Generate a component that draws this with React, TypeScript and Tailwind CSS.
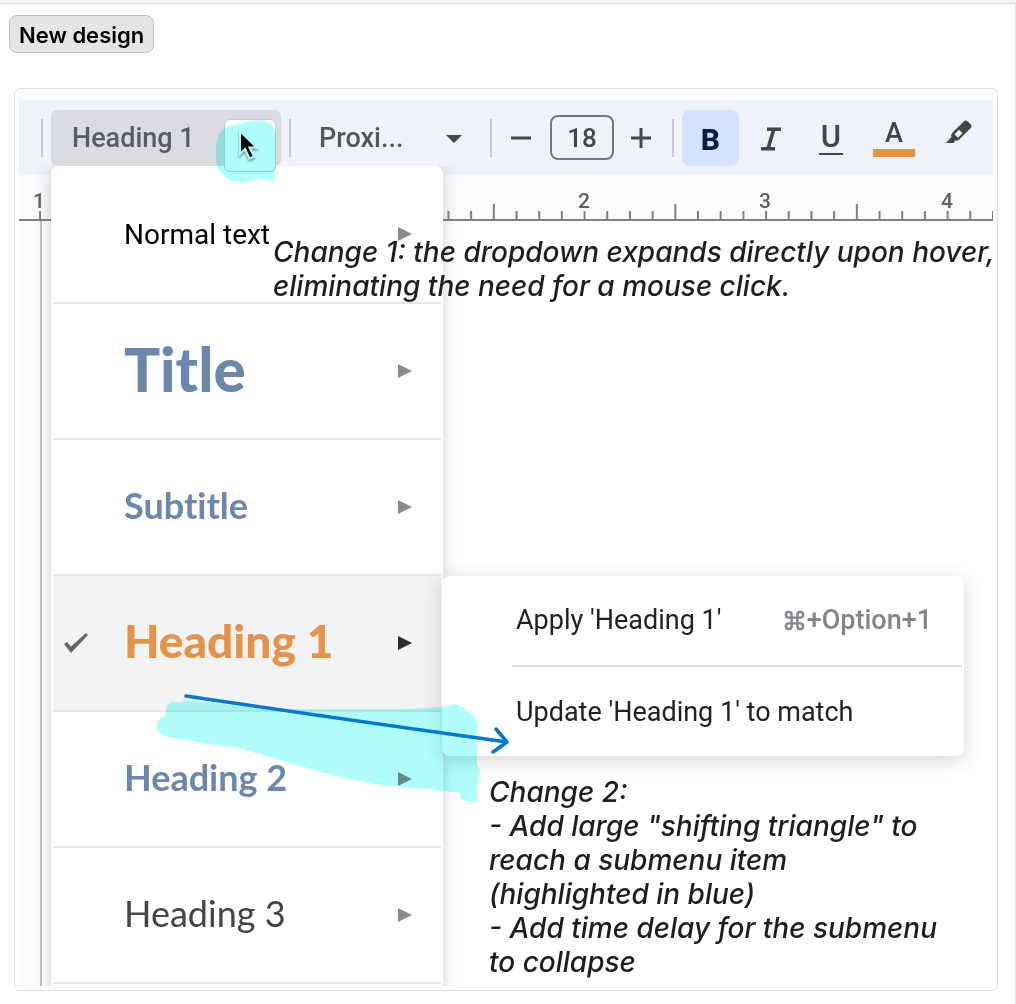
import React from "react";

const ticks = Array.from({ length: 43 }, (_, i) => i);

const styles = [
  { name: "Normal text", text: "text-[28px] text-black font-[Roboto] font-normal pt-[2px]" },
  { name: "Title", text: "text-[60px] text-[#6b87ab] font-[Lato] font-black pb-1" },
  { name: "Subtitle", text: "text-[36px] text-[#6b87ab] font-[Lato] font-bold pb-1" },
  { name: "Heading 1", text: "text-[46px] text-[#e69348] font-[Lato] font-black pb-1", active: true },
  { name: "Heading 2", text: "text-[36px] text-[#6b87ab] font-[Lato] font-bold pb-1" },
  { name: "Heading 3", text: "text-[36px] text-[#444444] font-[Lato] font-normal pb-1" },
];

function Divider({ className = "" }: { className?: string }) {
  return <span className={`h-[38px] w-[2px] shrink-0 bg-[#c7c9cb] ${className}`} />;
}

function Toolbar() {
  return (
    <div className="border-t-8 border-[#f9fbfd] bg-[#eff2f8] font-[Roboto] text-[#444746]">
      <div className="flex h-[75px] items-center overflow-hidden">
        <Divider className="ml-[22px]" />
        <button className="ml-2 h-14 w-[230px] shrink-0 rounded-md bg-[#dadce2] pt-[2px] pl-[21px] text-left text-[27px] font-medium text-[#5a5d5e]">
          Heading 1
        </button>
        <Divider className="ml-2" />
        <button className="ml-7 flex w-[144px] shrink-0 items-center justify-between pt-[2px] text-[27px] font-medium text-[#555857]">
          Proxi...
          <svg width="16" height="8" viewBox="0 0 16 8" className="mr-px">
            <path d="M0 0h16L8 8z" fill="#444746" />
          </svg>
        </button>
        <Divider className="ml-[27px]" />
        <button aria-label="Decrease font size" className="ml-[19px] shrink-0">
          <svg width="20" height="20" viewBox="0 0 20 20" stroke="#444746" strokeWidth="3">
            <path d="M0 10h20" />
          </svg>
        </button>
        <input
          aria-label="Font size"
          defaultValue="18"
          className="ml-[19px] h-[45px] w-16 shrink-0 rounded-lg border-2 border-[#747775] bg-transparent text-center text-[26px] font-medium"
        />
        <button aria-label="Increase font size" className="ml-[17px] shrink-0">
          <svg width="20" height="20" viewBox="0 0 20 20" stroke="#444746" strokeWidth="3">
            <path d="M0 10h20M10 0v20" />
          </svg>
        </button>
        <Divider className="ml-[21px]" />
        <button
          aria-label="Bold"
          className="ml-2 h-14 w-[57px] shrink-0 rounded-lg bg-[#d3e3fd] pt-1 text-[30px] font-extrabold text-[#041e49]"
        >
          B
        </button>
        <button aria-label="Italic" className="ml-[22px] shrink-0 pt-[2px]">
          <svg width="20" height="24" viewBox="0 0 20 24" fill="none" stroke="#444746" strokeWidth="3.6">
            <path d="M6 2.3h14M0 21.7h14M12.8 2.3L7 21.7" />
          </svg>
        </button>
        <button
          aria-label="Underline"
          className="ml-[38px] flex w-6 shrink-0 flex-col items-center pt-1 text-[31px] leading-6 font-medium"
        >
          U
          <span className="mt-1 h-[2px] w-full bg-[#444746]" />
        </button>
        <button
          aria-label="Text color"
          className="ml-[30px] flex w-[42px] shrink-0 flex-col items-center pt-[2px] text-[27px] leading-6 font-medium"
        >
          A
          <span className="mt-1 h-2 w-full bg-[#e69348]" />
        </button>
        <button aria-label="Highlight color" className="mb-3 ml-[30px] shrink-0">
          <svg width="28" height="25" viewBox="0 0 28 25">
            <path
              fillRule="evenodd"
              fill="#444746"
              d="M1 24L6.500 18Q5.500 15.500 7.500 13.500L19 2.200Q20.800 .6 22.600 2.200L25.800 5.400Q27.400 7.200 25.800 9L14.500 20.300Q12.500 22.200 10.300 21.500L8.500 24zM9.500 15.200L13 18.700L17.500 14.200L14 10.700z"
            />
          </svg>
        </button>
      </div>
    </div>
  );
}

function Ruler() {
  return (
    <div className="h-[46px] overflow-hidden border-b-2 border-[#808080] bg-[#f9fbfd]">
      <svg
        width="976"
        height="44"
        viewBox="0 0 976 44"
        fill="#5f6162"
        className="max-w-none font-[Roboto] text-[21px] font-medium"
      >
        {ticks.map((i) => (
          <rect key={i} x={20 + i * 22.69} y={i % 8 === 4 ? 29 : 36} width="2" height="15" fill="#808080" />
        ))}
        <text x="20" y="33" textAnchor="middle">1</text>
        <text x="565" y="33" textAnchor="middle">2</text>
        <text x="746" y="33" textAnchor="middle">3</text>
        <text x="928" y="33" textAnchor="middle">4</text>
      </svg>
    </div>
  );
}

function StyleMenu() {
  return (
    <ul className="absolute top-[74px] bottom-0 left-8 w-[392px] overflow-hidden rounded-t-lg bg-white px-[2px]">
      {styles.map((s) => (
        <li key={s.name} className="h-[136px] border-b-2 border-[#e6e6e6] first:h-[138px]">
          <button
            className={`flex h-full w-full items-center pr-[29px] text-left whitespace-nowrap ${s.active ? "bg-[#f1f3f4]" : ""}`}
          >
            <span className="flex w-[71px] shrink-0 justify-start pl-[10px]">
              {s.active && (
                <svg width="26" height="22" viewBox="0 0 26 22">
                  <path d="M1 12L4 10L8 14.500L23 1L25 3L8 21z" fill="#666" />
                </svg>
              )}
            </span>
            <span className={`grow leading-none [font-variant-ligatures:none] ${s.text}`}>{s.name}</span>
            <svg width="14" height="14" viewBox="0 0 14 14" className="shrink-0">
              <path d="M0 0L14 7L0 14z" fill={s.active ? "#2b2b2b" : "#8c8c8e"} />
            </svg>
          </button>
        </li>
      ))}
    </ul>
  );
}

function Submenu() {
  return (
    <div className="absolute top-[484px] left-[423px] h-[180px] w-[522px] rounded-lg bg-white pr-[2px] pl-[70px] font-[Roboto] text-[27px] text-[#202124] shadow-[0_4px_20px_rgba(60,64,67,0.22)]">
      <button className="flex h-[91px] w-full items-center justify-between border-b-2 border-[#dadce0] pr-[30px] pl-1 whitespace-nowrap">
        <span>Apply 'Heading 1'</span>
        <span className="flex items-center font-medium text-[#80868b]">
          <svg
            width="23"
            height="23"
            viewBox="0 0 24 24"
            fill="none"
            stroke="currentColor"
            strokeWidth="2.500"
            className="mr-px"
          >
            <path d="M15 6v12a3 3 0 1 0 3-3H6a3 3 0 1 0 3 3V6a3 3 0 1 0-3 3h12a3 3 0 1 0-3-3" />
          </svg>
          +Option+1
        </span>
      </button>
      <button className="flex h-[90px] w-full items-center pl-1 whitespace-nowrap">Update 'Heading 1' to match</button>
    </div>
  );
}

function HoverTarget() {
  return (
    <div className="absolute top-[27px] left-[205px] h-[53px] w-[52px] rounded-md border border-[#cccccc] bg-white">
      <svg width="28" height="36" viewBox="0 0 28 36" className="mt-2 ml-3 drop-shadow-[0_2px_1px_rgba(0,0,0,0.4)]">
        <path
          d="M3 3V26L8 21L12.500 30.500L17 28.500L12.500 19.500H19.500z"
          fill="#000"
          stroke="#fff"
          strokeWidth="2"
        />
      </svg>
    </div>
  );
}

function Markup() {
  return (
    <>
      <svg
        width="1016"
        height="1004"
        viewBox="0 0 1016 1004"
        className="pointer-events-none absolute top-0 left-0 max-w-none mix-blend-multiply"
      >
        <g fill="#b0fffb">
          <path d="M217 140Q220 127 233 125L250 121Q266 119 273 126Q277 132 276 150V162L274 181Q266 180 258 178Q247 184 233 181Q215 174 216 155Q215 148 217 140z" />
          <path d="M183 700V702L172 702Q166 703 166 711Q166 717 162 717Q156 721 157 728Q159 736 175 738Q200 743 233 747C280 758 320 775 380 785Q425 788 460 793V797Q463 802 469 801L477 803L478 780Q483 771 477 765V725Q477 715 467 711Q459 701 447 706Q420 709 397 709H290Q230 706 183 700z" />
        </g>
      </svg>
      <svg
        width="1016"
        height="1004"
        viewBox="0 0 1016 1004"
        className="pointer-events-none absolute top-0 left-0 max-w-none"
      >
        <path
          d="M186 696Q340 719 507 742M496 729L507 742L493 752"
          fill="none"
          stroke="#0078d4"
          strokeWidth="3.500"
          strokeLinecap="round"
          strokeLinejoin="round"
        />
      </svg>
    </>
  );
}

export default function App() {
  return (
    <div className="relative min-h-screen overflow-hidden bg-white font-[Inter]">
      <div className="h-1 border-b border-[#e2e2e2] bg-[#f4f4f4]" />
      <main className="min-h-[1000px] border-r border-[#e6e6e6] pt-[11px] pr-[17px] pb-3 pl-[14px]">
        <button className="-ml-[5px] h-[38px] rounded-lg border border-[#bfbfbf] bg-[#e5e5e5] px-[9px] pt-[2px] text-[22px] leading-none font-semibold text-black">
          New design
        </button>
        <section className="mt-[35px] rounded-md border border-[#dedede] px-1 pt-[3px] pb-1">
          <div className="relative">
            <Toolbar />
            <Ruler />
            <div className="flex h-[765px] bg-white">
              <div className="w-[23px] shrink-0 border-r-2 border-[#c0c0c0] bg-[#f9fbfd]" />
            </div>
            <div className="pointer-events-none absolute top-[74px] bottom-0 left-0 w-full overflow-hidden">
              <div className="ml-8 h-[900px] w-[392px] rounded-lg shadow-[0_2px_16px_rgba(60,64,67,0.25)]" />
            </div>
            <StyleMenu />
            <Submenu />
            <HoverTarget />
          </div>
        </section>
      </main>
      <Markup />
      <p className="absolute top-[235px] left-[273px] font-[Inter] text-[28px] leading-[34px] font-medium whitespace-nowrap text-[#1e1e1e] italic">
        Change 1: the dropdown expands directly upon hover,
        <br />
        eliminating the need for a mouse click.
      </p>
      <div className="absolute top-[775px] left-[489px] font-[Inter] text-[28px] leading-[34px] font-medium whitespace-nowrap text-[#1e1e1e] italic">
        <p>Change 2:</p>
        <p>
          - Add large "shifting triangle" to
          <br />
          reach a submenu item
          <br />
          (highlighted in blue)
        </p>
        <p>
          - Add time delay for the submenu
          <br />
          to collapse
        </p>
      </div>
    </div>
  );
}
